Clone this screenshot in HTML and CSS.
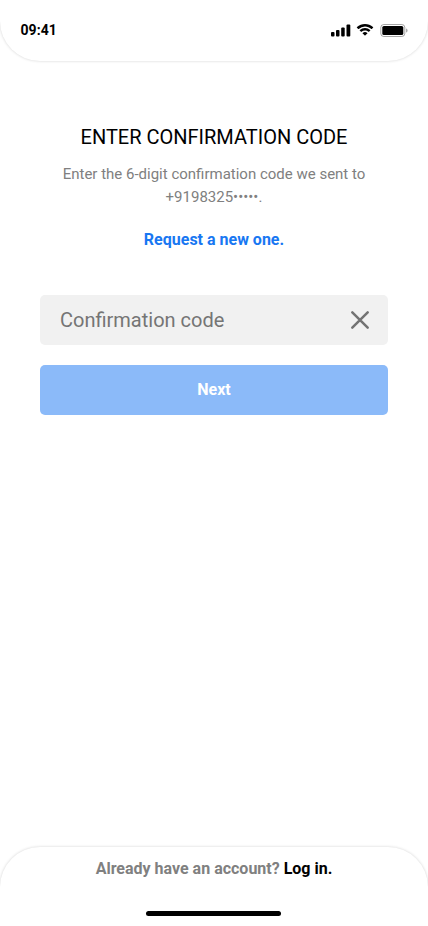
FILE: index.html
```html
<!DOCTYPE html>
<html lang="en">
<head>
<meta charset="utf-8">
<meta name="viewport" content="width=device-width, initial-scale=1">
<title>Confirmation code</title>
<link rel="stylesheet" href="styles.css">
</head>
<body>
<div class="screen">
  <header class="status-bar">
    <span class="time">09:41</span>
    <svg class="status-icons" width="78" height="14" viewBox="0 0 78 14" aria-hidden="true">
      <rect x="1" y="9" width="3.500" height="4.500" rx="1"/>
      <rect x="6" y="7" width="3.500" height="6.500" rx="1"/>
      <rect x="11.200" y="4.500" width="3.500" height="9" rx="1"/>
      <rect x="16.500" y="1.500" width="3.800" height="12" rx="1"/>
      <g transform="translate(1 .2)">
      <path d="M34 3.200c2.400 0 4.600.9 6.300 2.500.1.100.3.100.5 0l1.200-1.200a.4.400 0 0 0 0-.6 11.600 11.600 0 0 0-16 0 .4.400 0 0 0 0 .6l1.200 1.200c.1.100.3.100.5 0A9.100 9.100 0 0 1 34 3.200zm0 4.100c1.300 0 2.500.5 3.500 1.300.1.100.3.100.5 0l1.200-1.200a.4.400 0 0 0 0-.6 7.600 7.600 0 0 0-10.400 0 .4.400 0 0 0 0 .6L30 8.600c.1.100.3.100.5 0A5.300 5.300 0 0 1 34 7.300zm2.300 3a.3.300 0 0 0 0-.5 3.600 3.600 0 0 0-4.600 0 .3.300 0 0 0 0 .5l2.100 2.100c.1.100.3.100.4 0z"/>
      </g>
      <rect class="battery-shell" x="50.800" y="1.500" width="24" height="12" rx="3"/>
      <path class="battery-tip" d="M76.200 5.500v4c.8-.3 1.300-1.100 1.300-2s-.5-1.700-1.300-2z"/>
      <rect x="52.300" y="3" width="21" height="9" rx="1.600"/>
    </svg>
  </header>
  <main class="content">
    <h1 class="title">ENTER CONFIRMATION CODE</h1>
    <p class="description">Enter the 6-digit confirmation code we sent to +9198325•••••.</p>
    <a class="request">Request a new one.</a>
    <form class="form">
      <div class="field">
        <input class="code" type="text" placeholder="Confirmation code" aria-label="Confirmation code">
        <svg width="20" height="20" viewBox="0 0 20 20" aria-hidden="true"><path class="cross" d="M2.300 2.300l15.400 15.400M17.700 2.300L2.300 17.700"/></svg>
      </div>
      <button class="next" type="button">Next</button>
    </form>
  </main>
  <footer class="footer">
    <p class="login">Already have an account? <a class="login-link">Log in.</a></p>
    <div class="home-indicator"></div>
  </footer>
</div>
</body>
</html>
```
FILE: styles.css
```css
* { box-sizing: border-box; margin: 0; }
body { font-family: Roboto, sans-serif; background: #fff; }
.screen { display: flex; flex-direction: column; height: 926px; overflow: hidden; }
.status-bar {
  display: flex; justify-content: space-between; align-items: flex-start;
  height: 61px; padding: 21px 20px 0 20.5px;
  border-radius: 0 0 40px 40px; box-shadow: 0 0 3px rgba(0,0,0,.18);
}
.time { font-size: 14px; line-height: 18px; font-weight: 700; letter-spacing: .05px; }
.status-icons { margin-top: 2px; }
.battery-shell { fill: none; stroke: #000; stroke-opacity: .35; }
.battery-tip { fill-opacity: .4; }
.content { flex: 1; padding: 64px 40px 0; text-align: center; }
.title { font-size: 20px; line-height: 24px; font-weight: 400; }
.description { width: 310px; margin: 14px auto 0; font-size: 15px; line-height: 23px; color: #808080; }
.request { display: block; margin-top: 21px; font-size: 16px; line-height: 19px; font-weight: 700; color: #1877f2; }
.form { display: grid; gap: 20px; margin-top: 46px; }
.field { display: flex; align-items: center; height: 50px; padding: 0 18px 0 20px; border-radius: 5px; background: #f1f1f1; }
.code { flex: 1; min-width: 0; padding: 0; border: 0; outline: 0; background: none; font: 400 20px/24px Roboto, sans-serif; }
.code::placeholder { color: #757575; opacity: 1; }
.cross { stroke: #737373; stroke-width: 2.5; stroke-linecap: round; }
.next { height: 50px; padding: 0 0 2px; border: 0; border-radius: 5px; background: #8bbaf9; color: #fff; font: 700 16px/19px Roboto, sans-serif; }
.footer {
  display: flex; flex-direction: column; align-items: center; height: 79px; padding-top: 12px;
  border-radius: 40px 40px 0 0; box-shadow: 0 0 3px rgba(0,0,0,.18);
}
.login { font-size: 16px; line-height: 19px; font-weight: 700; color: #808080; }
.login-link { color: #000; }
.home-indicator { width: 135px; height: 5px; margin: 33px 1px 0 0; border-radius: 3px; background: #000; }
```
